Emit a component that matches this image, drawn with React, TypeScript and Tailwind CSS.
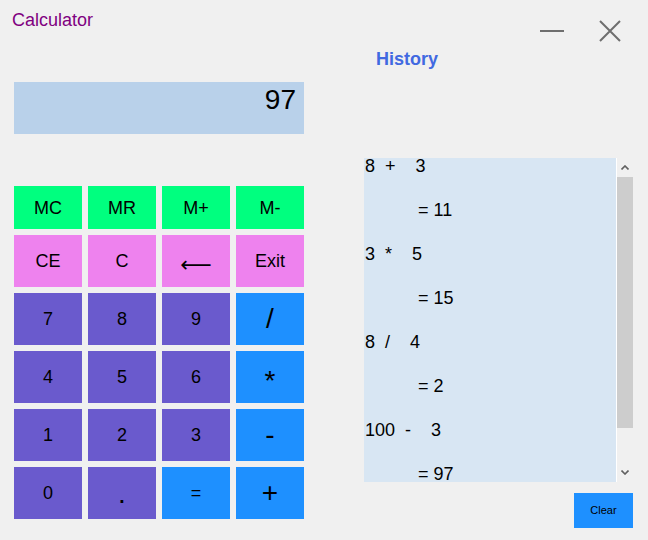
import React from 'react';

const history = [
  '8  +    3',
  '= 11',
  '3  *    5',
  '= 15',
  '8  /    4',
  '= 2',
  '100  -    3',
  '= 97',
];

type Key = { label: string; color: string; big?: boolean; arrow?: boolean; extra?: string };

const keys: Key[] = [
  { label: 'MC', color: 'bg-[#00ff7f]' },
  { label: 'MR', color: 'bg-[#00ff7f]' },
  { label: 'M+', color: 'bg-[#00ff7f]' },
  { label: 'M-', color: 'bg-[#00ff7f]' },
  { label: 'CE', color: 'bg-[#ee82ee]' },
  { label: 'C', color: 'bg-[#ee82ee]' },
  { label: '⟵', color: 'bg-[#ee82ee]', arrow: true },
  { label: 'Exit', color: 'bg-[#ee82ee]' },
  { label: '7', color: 'bg-[#6a5acd]' },
  { label: '8', color: 'bg-[#6a5acd]' },
  { label: '9', color: 'bg-[#6a5acd]' },
  { label: '/', color: 'bg-[#1e90ff]', big: true },
  { label: '4', color: 'bg-[#6a5acd]' },
  { label: '5', color: 'bg-[#6a5acd]' },
  { label: '6', color: 'bg-[#6a5acd]' },
  { label: '*', color: 'bg-[#1e90ff]', big: true, extra: 'pt-[8px]' },
  { label: '1', color: 'bg-[#6a5acd]' },
  { label: '2', color: 'bg-[#6a5acd]' },
  { label: '3', color: 'bg-[#6a5acd]' },
  { label: '-', color: 'bg-[#1e90ff]', big: true },
  { label: '0', color: 'bg-[#6a5acd]' },
  { label: '.', color: 'bg-[#6a5acd]', big: true, extra: 'pt-[2px]' },
  { label: '=', color: 'bg-[#1e90ff]' },
  { label: '+', color: 'bg-[#1e90ff]', big: true },
];

export default function App() {
  return (
    <div className="flex w-[648px] h-[540px] bg-[#f0f0f0] font-['Liberation_Sans',Arial,sans-serif] text-black overflow-hidden">
      {/* left: calculator */}
      <div className="w-[318px] px-[14px] pt-[10px] flex flex-col">
        <div className="-ml-[2px] text-[18px] leading-[20px] text-[#800080]">Calculator</div>
        <div className="mt-[52px] h-[52px] w-[290px] bg-[#b9d1ea] text-right pr-[8px] pt-[2px] text-[28px] leading-[32px]">
          97
        </div>
        <div className="mt-[52px] w-[290px] grid grid-cols-4 grid-rows-[43px_repeat(5,52px)] gap-[6px]">
          {keys.map((k) => (
            <button
              key={k.label}
              className={`${k.color} flex items-center justify-center ${k.extra ?? ''} ${
                k.arrow
                  ? "text-[22px] pt-[6px] font-['DejaVu_Sans',sans-serif]"
                  : k.big
                  ? 'text-[28px] leading-[32px]'
                  : 'text-[18px] leading-[20px]'
              }`}
            >
              {k.label}
            </button>
          ))}
        </div>
      </div>

      {/* right: history */}
      <div className="flex-1 pl-[46px] flex flex-col">
        <div className="mt-[20px] h-[22px] flex items-center justify-end gap-[35px] pr-[27px]">
          <svg width="24" height="22" viewBox="0 0 24 22">
            <line x1="0" y1="11" x2="24" y2="11" stroke="#6e6e6e" strokeWidth="2" />
          </svg>
          <svg width="22" height="22" viewBox="0 0 22 22">
            <path d="M1 1 L21 21 M21 1 L1 21" stroke="#6e6e6e" strokeWidth="2" fill="none" />
          </svg>
        </div>
        <div className="mt-[7px] ml-[12px] text-[18px] leading-[20px] font-bold text-[#4169e1]">History</div>

        <div className="mt-[89px] flex h-[324px] w-[269px]">
          <div className="w-[252px] bg-[#d8e6f3] overflow-hidden">
            <div className="-mt-[2px] pl-[1px]">
              {history.map((h, i) => (
                <div
                  key={i}
                  className={`h-[44px] text-[18px] leading-[20px] whitespace-pre ${i % 2 ? 'pl-[53px]' : ''}`}
                >
                  {h}
                </div>
              ))}
            </div>
          </div>
          <div className="w-px bg-white" />
          <div className="w-[16px] flex flex-col bg-[#f0f0f0]">
            <div className="h-[19px] flex items-center justify-center">
              <svg width="8" height="5" viewBox="0 0 8 5">
                <path d="M0.5 4.5 L4 1 L7.5 4.5" stroke="#606060" strokeWidth="1.6" fill="none" />
              </svg>
            </div>
            <div className="h-[251px] bg-[#cdcdcd]" />
            <div className="flex-1 flex items-end justify-center pb-[7px]">
              <svg width="8" height="5" viewBox="0 0 8 5">
                <path d="M0.5 0.5 L4 4 L7.5 0.5" stroke="#606060" strokeWidth="1.6" fill="none" />
              </svg>
            </div>
          </div>
        </div>

        <div className="mt-[11px] w-[269px] flex justify-end">
          <button className="w-[59px] h-[35px] bg-[#1e90ff] text-[11px] flex items-center justify-center">
            Clear
          </button>
        </div>
      </div>
    </div>
  );
}
